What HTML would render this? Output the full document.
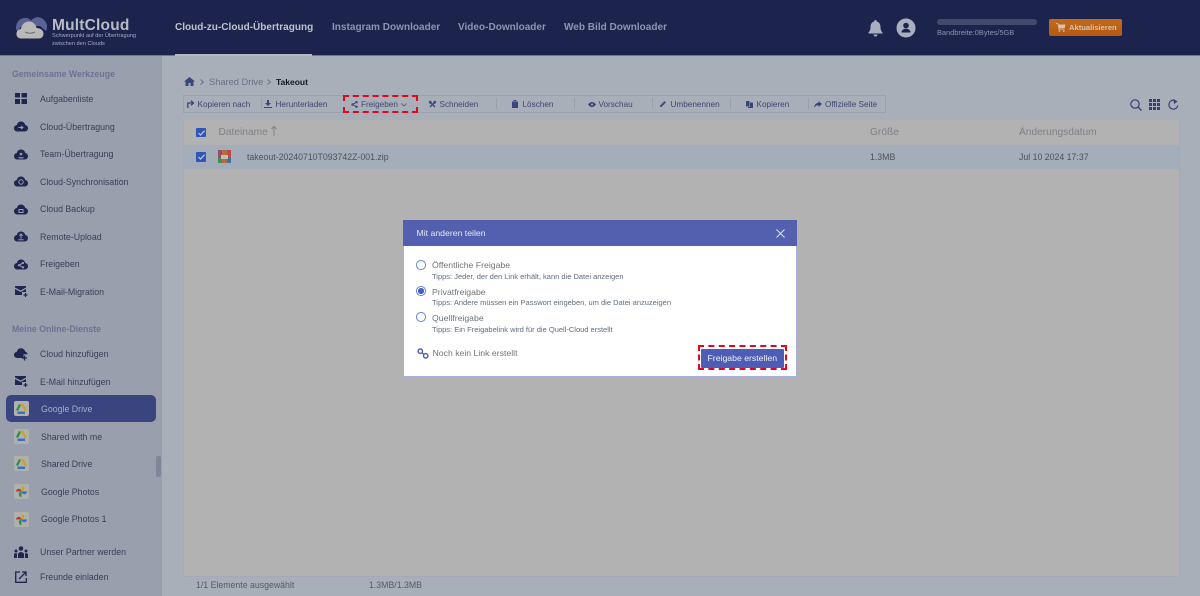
<!DOCTYPE html>
<html lang="de"><head><meta charset="utf-8"><title>MultCloud</title>
<style>
html,body{margin:0;padding:0}
body{width:1200px;height:596px;overflow:hidden;position:relative;background:#a9afb9;font-family:"Liberation Sans",sans-serif;font-size:9px;color:#3f4559}
.a{position:absolute;white-space:nowrap}
svg{position:absolute;overflow:visible}
#hd{left:0;top:0;width:1200px;height:56px;background:#1c244e;border-bottom:1px solid #6f7690;box-sizing:border-box}
#sb{left:0;top:56px;width:162px;height:540px;background:#9a9fae}
.nav{font-size:10px;font-weight:bold;top:22px;letter-spacing:.02px}
.sec{font-size:8.75px;font-weight:bold;color:#6c7293;left:12px}
.it{font-size:8.8px;color:#383e56;left:40px}
.gi{left:14px;width:15px;height:15px;background:#b0b1ad;border-radius:2px}
.tb{font-size:8.2px;color:#3d4670;top:100px}
.sep{position:absolute;top:98px;width:1px;height:11px;background:#98a0b0}
.ck{position:absolute;left:196px;width:9.5px;height:9.5px;background:#2f55b8;border-radius:1px}
.rd{position:absolute;left:416px;width:9.5px;height:9.5px;border:1px solid #6c86d8;border-radius:50%;background:#fff;box-sizing:border-box}
.opt{font-size:8.7px;color:#6f7378;left:432px}
.tip{font-size:7.5px;color:#5f6d80;left:432px}
.t{font-size:8.75px;color:#4d5158}
</style></head><body>
<div class="a" id="hd"></div>
<div class="a" id="sb"></div>

<!-- logo -->
<svg style="left:14px;top:16px" width="34" height="24" viewBox="0 0 34 24">
<path d="M3 15C.5 11 3 3 10 2C13 1.500 15 2.500 17 4.500C20 1 25 0 29 3C33 6 34 11 32 15L26 10L8 10Z" fill="#5a6398"/>
<path d="M7 22.500C3.500 22.500 2 19.500 2.500 17C3 14.500 5 13 7 13C7.500 8.500 11 5.500 15 5.500C19 5.500 22 8.500 22.500 12C26.500 12 29.500 14.500 29.500 17.500C29.500 20.500 27.500 22.500 25 22.500Z" fill="#b9bab8"/>
<path d="M11 16Q16 18.500 21 16" stroke="#6b6f76" stroke-width="1" fill="none"/>
</svg>
<div class="a" style="left:52px;top:17px;font-size:15.5px;font-weight:bold;color:#b9bcc4;letter-spacing:.2px">MultCloud</div>
<div class="a" style="left:52px;top:33px;font-size:5.6px;color:#a7a9c4">Schwerpunkt auf der Übertragung</div>
<div class="a" style="left:52px;top:41px;font-size:5.6px;color:#a7a9c4">zwischen den Clouds</div>

<div class="a nav" style="left:175px;color:#bfc3cc">Cloud-zu-Cloud-Übertragung</div>
<div class="a" style="left:175px;top:54px;width:137px;height:2px;background:#b5b9c2"></div>
<div class="a nav" style="left:332px;color:#8f95ae">Instagram Downloader</div>
<div class="a nav" style="left:458px;color:#8f95ae">Video-Downloader</div>
<div class="a nav" style="left:564px;color:#8f95ae">Web Bild Downloader</div>

<!-- bell, user -->
<svg style="left:868px;top:20px" width="15" height="17" viewBox="0 0 15 17"><path d="M7.500 0a1.300 1.300 0 0 1 1.300 1.500C11.500 2.200 12.500 4.500 12.500 7c0 3 .8 4.300 2 5.500V13.500H.5V12.500C1.700 11.300 2.500 10 2.500 7c0-2.500 1-4.800 3.700-5.500A1.300 1.300 0 0 1 7.500 0zM5.500 14.500h4a2 2 0 0 1-4 0z" fill="#a9aec0"/></svg>
<svg style="left:896px;top:18px" width="20" height="20" viewBox="0 0 20 20"><circle cx="10" cy="10" r="9.500" fill="#a9aec0"/><circle cx="10" cy="7.500" r="2.800" fill="#1c244e"/><path d="M5.500 14.500c0-5 9-5 9 0z" fill="#1c244e"/></svg>
<div class="a" style="left:937px;top:19px;width:100px;height:6px;border-radius:3px;background:#444a6c"></div>
<div class="a" style="left:937px;top:28px;font-size:7.4px;color:#8d93ad">Bandbreite:0Bytes/5GB</div>
<div class="a" style="left:1049px;top:19px;width:73px;height:17px;border-radius:2px;background:linear-gradient(#c46a1c,#b45a12)"></div>
<svg style="left:1056px;top:23px" width="10" height="9" viewBox="0 0 10 9"><path d="M0 0H2L2.500 1.500H9.500L8.500 5.500H3.200L3.500 6.500H8.500V7H2.800L1.500 .8H0Z" fill="#d3c4b5"/><circle cx="3.500" cy="8" r=".9" fill="#d3c4b5"/><circle cx="7.800" cy="8" r=".9" fill="#d3c4b5"/></svg>
<div class="a" style="left:1069px;top:23px;font-size:7.6px;font-weight:bold;color:#d8c4b2">Aktualisieren</div>

<!-- sidebar -->
<div class="a sec" style="top:69px">Gemeinsame Werkzeuge</div>
<svg style="left:15px;top:93px" width="12" height="11" viewBox="0 0 12 11"><path d="M0 0H5V4.500H0ZM6.500 0H12V4.500H6.500ZM0 6H5V11H0ZM6.500 6H12V11H6.500Z" fill="#1f2750"/></svg>
<div class="a it" style="top:94px">Aufgabenliste</div>

<svg style="left:14px;top:121px" width="14" height="11" viewBox="0 0 14 11"><path d="M3.500 10.500C1.500 10.500 0 9 0 7.200C0 5.500 1.300 4.200 2.900 4C3.300 1.800 5 .5 7 .5C9.200 .5 10.900 2 11.200 4C12.800 4.200 14 5.500 14 7.200C14 9 12.500 10.500 10.500 10.500Z" fill="#1f2750"/><path d="M4.500 6.500H8.500M7 5L9 6.500L7 8" stroke="#9a9fae" fill="none"/></svg>
<div class="a it" style="top:121.500px">Cloud-Übertragung</div>
<svg style="left:14px;top:149px" width="14" height="11" viewBox="0 0 14 11"><path d="M3.500 10.500C1.500 10.500 0 9 0 7.200C0 5.500 1.300 4.200 2.900 4C3.300 1.800 5 .5 7 .5C9.200 .5 10.900 2 11.200 4C12.800 4.200 14 5.500 14 7.200C14 9 12.500 10.500 10.500 10.500Z" fill="#1f2750"/><circle cx="7" cy="5" r="1.300" fill="#9a9fae"/><path d="M4.500 8.800H9.500" stroke="#9a9fae" stroke-width="1.200"/></svg>
<div class="a it" style="top:149px">Team-Übertragung</div>
<svg style="left:14px;top:176px" width="14" height="11" viewBox="0 0 14 11"><path d="M3.500 10.500C1.500 10.500 0 9 0 7.200C0 5.500 1.300 4.200 2.900 4C3.300 1.800 5 .5 7 .5C9.200 .5 10.900 2 11.200 4C12.800 4.200 14 5.500 14 7.200C14 9 12.500 10.500 10.500 10.500Z" fill="#1f2750"/><circle cx="7" cy="6" r="2.200" stroke="#9a9fae" fill="none"/></svg>
<div class="a it" style="top:176.500px">Cloud-Synchronisation</div>
<svg style="left:14px;top:204px" width="14" height="11" viewBox="0 0 14 11"><path d="M3.500 10.500C1.500 10.500 0 9 0 7.200C0 5.500 1.300 4.200 2.900 4C3.300 1.800 5 .5 7 .5C9.200 .5 10.900 2 11.200 4C12.800 4.200 14 5.500 14 7.200C14 9 12.500 10.500 10.500 10.500Z" fill="#1f2750"/><path d="M5 5.500H9V8.500H5Z" stroke="#9a9fae" fill="none"/></svg>
<div class="a it" style="top:204px">Cloud Backup</div>
<svg style="left:14px;top:231px" width="14" height="11" viewBox="0 0 14 11"><path d="M3.500 10.500C1.500 10.500 0 9 0 7.200C0 5.500 1.300 4.200 2.900 4C3.300 1.800 5 .5 7 .5C9.200 .5 10.900 2 11.200 4C12.800 4.200 14 5.500 14 7.200C14 9 12.500 10.500 10.500 10.500Z" fill="#1f2750"/><path d="M7 3V7.500M5.300 4.700L7 3L8.700 4.700M4.500 8.800H9.500" stroke="#9a9fae" fill="none"/></svg>
<div class="a it" style="top:231.500px">Remote-Upload</div>
<svg style="left:14px;top:259px" width="14" height="11" viewBox="0 0 14 11"><path d="M3.500 10.500C1.500 10.500 0 9 0 7.200C0 5.500 1.300 4.200 2.900 4C3.300 1.800 5 .5 7 .5C9.200 .5 10.900 2 11.200 4C12.800 4.200 14 5.500 14 7.200C14 9 12.500 10.500 10.500 10.500Z" fill="#1f2750"/><path d="M5 6.200L9 4M5 6.200L9 8.400" stroke="#9a9fae" fill="none"/><circle cx="5" cy="6.200" r="1.100" fill="#9a9fae"/><circle cx="9" cy="4" r="1.100" fill="#9a9fae"/><circle cx="9" cy="8.400" r="1.100" fill="#9a9fae"/></svg>
<div class="a it" style="top:259px">Freigeben</div>
<svg style="left:15px;top:286px" width="13" height="12" viewBox="0 0 13 12"><path d="M0 0H11V1.500L5.500 4.500L0 1.500ZM0 3L5.500 6L11 3V6H7V9H0Z" fill="#1f2750"/><path d="M10.500 7V11M8.500 9H12.500" stroke="#1f2750" stroke-width="1.200"/></svg>
<div class="a it" style="top:286.500px">E-Mail-Migration</div>

<div class="a sec" style="top:324px">Meine Online-Dienste</div>
<svg style="left:14px;top:348px" width="14" height="13" viewBox="0 0 14 13"><path d="M3.500 10C1.500 10 0 8.700 0 7C0 5.300 1.300 4 2.900 3.800C3.300 1.600 5 .3 7 .3C9.200 .3 10.900 1.800 11.200 3.800C12.500 4 13.500 5 13.800 6.300H9.500V10Z" fill="#1f2750"/><path d="M10.500 7.500V12.500M8 10H13" stroke="#1f2750" stroke-width="1.300"/></svg>
<div class="a it" style="top:349px">Cloud hinzufügen</div>
<svg style="left:15px;top:376px" width="13" height="12" viewBox="0 0 13 12"><path d="M0 0H11V1.500L5.500 4.500L0 1.500ZM0 3L5.500 6L11 3V6H7V9H0Z" fill="#1f2750"/><path d="M10.500 7V11M8.500 9H12.500" stroke="#1f2750" stroke-width="1.200"/></svg>
<div class="a it" style="top:376.500px">E-Mail hinzufügen</div>

<div class="a" style="left:6px;top:395px;width:150px;height:27px;border-radius:5px;background:#3a447e"></div>
<div class="a gi" style="top:401px"></div>
<svg style="left:16px;top:403.500px" width="11" height="10" viewBox="0 0 11 10"><path d="M4 .5L1 6.500" stroke="#2f8f52" stroke-width="2.400"/><path d="M4.500 .8H6.500L10 7" stroke="#c9a32a" stroke-width="2.400" fill="none"/><path d="M1.500 8.800H9" stroke="#3a6fc4" stroke-width="2.400"/></svg>
<div class="a it" style="top:404px;left:41px;color:#a9aec8">Google Drive</div>

<div class="a gi" style="top:428.500px"></div>
<svg style="left:16px;top:431px" width="11" height="10" viewBox="0 0 11 10"><path d="M4 .5L1 6.500" stroke="#2f8f52" stroke-width="2.400"/><path d="M4.500 .8H6.500L10 7" stroke="#c9a32a" stroke-width="2.400" fill="none"/><path d="M1.500 8.800H9" stroke="#3a6fc4" stroke-width="2.400"/></svg>
<div class="a it" style="top:431.500px;left:41px">Shared with me</div>
<div class="a gi" style="top:456px"></div>
<svg style="left:16px;top:458.500px" width="11" height="10" viewBox="0 0 11 10"><path d="M4 .5L1 6.500" stroke="#2f8f52" stroke-width="2.400"/><path d="M4.500 .8H6.500L10 7" stroke="#c9a32a" stroke-width="2.400" fill="none"/><path d="M1.500 8.800H9" stroke="#3a6fc4" stroke-width="2.400"/></svg>
<div class="a it" style="top:459px;left:41px">Shared Drive</div>

<div class="a gi" style="top:484px"></div>
<svg style="left:16px;top:486px" width="11" height="11" viewBox="0 0 13 13"><path d="M6.500 6.500V0A3.200 3.200 0 0 1 6.500 6.500Z" fill="#b3402f" transform="rotate(-90 6.500 6.500)"/><path d="M6.500 6.500V0A3.200 3.200 0 0 1 6.500 6.500Z" fill="#c9a32a"/><path d="M6.500 6.500V0A3.200 3.200 0 0 1 6.500 6.500Z" fill="#3a6fc4" transform="rotate(90 6.500 6.500)"/><path d="M6.500 6.500V0A3.200 3.200 0 0 1 6.500 6.500Z" fill="#2f8f52" transform="rotate(180 6.500 6.500)"/></svg>
<div class="a it" style="top:486.500px;left:41px">Google Photos</div>
<div class="a gi" style="top:511.500px"></div>
<svg style="left:16px;top:513.500px" width="11" height="11" viewBox="0 0 13 13"><path d="M6.500 6.500V0A3.200 3.200 0 0 1 6.500 6.500Z" fill="#b3402f" transform="rotate(-90 6.500 6.500)"/><path d="M6.500 6.500V0A3.200 3.200 0 0 1 6.500 6.500Z" fill="#c9a32a"/><path d="M6.500 6.500V0A3.200 3.200 0 0 1 6.500 6.500Z" fill="#3a6fc4" transform="rotate(90 6.500 6.500)"/><path d="M6.500 6.500V0A3.200 3.200 0 0 1 6.500 6.500Z" fill="#2f8f52" transform="rotate(180 6.500 6.500)"/></svg>
<div class="a it" style="top:514px;left:41px">Google Photos 1</div>
<div class="a" style="left:156px;top:456px;width:5px;height:21px;border-radius:2px;background:#7f8699"></div>

<svg style="left:14px;top:546px" width="14" height="12" viewBox="0 0 14 12"><circle cx="7" cy="2.500" r="2.300" fill="#1f2750"/><circle cx="2" cy="5" r="1.500" fill="#1f2750"/><circle cx="12" cy="5" r="1.500" fill="#1f2750"/><path d="M4 12V7.500Q7 4.500 10 7.500V12ZM0 12V8Q1.500 6.500 3 7.500V12ZM11 12V7.500Q12.500 6.500 14 8V12Z" fill="#1f2750"/></svg>
<div class="a it" style="top:547px">Unser Partner werden</div>
<svg style="left:15px;top:571px" width="12" height="12" viewBox="0 0 12 12"><path d="M5 1H.7V11.300H11.300V7" stroke="#1f2750" stroke-width="1.300" fill="none"/><path d="M4 8L10.500 1.500M7 1H11V5" stroke="#1f2750" stroke-width="1.300" fill="none"/></svg>
<div class="a it" style="top:572px">Freunde einladen</div>

<!-- breadcrumb -->
<svg style="left:184px;top:77px" width="11" height="9" viewBox="0 0 11 9"><path d="M5.500 0L11 4.500H9.500V9H6.500V6H4.500V9H1.500V4.500H0Z" fill="#3a447e"/></svg>
<svg style="left:200px;top:79px" width="4" height="6" viewBox="0 0 4 6"><path d="M.5 .5L3.300 3L.5 5.500" stroke="#6a7080" fill="none"/></svg>
<div class="a" style="left:209px;top:77px;font-size:9.3px;color:#6a7080">Shared Drive</div>
<svg style="left:266.500px;top:79px" width="4" height="6" viewBox="0 0 4 6"><path d="M.5 .5L3.300 3L.5 5.500" stroke="#6a7080" fill="none"/></svg>
<div class="a" style="left:276px;top:77px;font-size:8.5px;font-weight:bold;color:#15171f">Takeout</div>

<!-- toolbar -->
<div class="a" style="left:183px;top:95px;width:703px;height:18px;border:1px solid #9aa2b2;box-sizing:border-box"></div>
<svg style="left:187px;top:100px" width="8" height="8" viewBox="0 0 8 8"><path d="M.8 8V3H5.500M4 .8L6.500 3L4 5.200" stroke="#3a447e" stroke-width="1.300" fill="none"/></svg>
<div class="a tb" style="left:197.500px">Kopieren nach</div><i class="sep" style="left:261px"></i>
<svg style="left:264px;top:100px" width="8" height="8" viewBox="0 0 8 8"><path d="M3 0H5V3H7L4 6L1 3H3ZM0 7H8V8H0Z" fill="#3a447e"/></svg>
<div class="a tb" style="left:275.500px">Herunterladen</div>
<svg style="left:351px;top:101px" width="7" height="7" viewBox="0 0 7 7"><path d="M5.500 1.200L1.500 3.500L5.500 5.800" stroke="#3a447e" fill="none"/><circle cx="5.500" cy="1.200" r="1.200" fill="#3a447e"/><circle cx="1.500" cy="3.500" r="1.200" fill="#3a447e"/><circle cx="5.500" cy="5.800" r="1.200" fill="#3a447e"/></svg>
<div class="a tb" style="left:361px">Freigeben</div>
<svg style="left:401px;top:103px" width="6" height="4" viewBox="0 0 6 4"><path d="M.5 .5L3 3L5.500 .5" stroke="#5f6780" fill="none"/></svg>
<svg style="left:429px;top:100.500px" width="7" height="7" viewBox="0 0 7 7"><path d="M1 1L6 6M6 1L1 6" stroke="#3a447e" stroke-width="1.300"/><circle cx="1.200" cy="1.200" r="1" stroke="#3a447e" fill="none" stroke-width=".8"/><circle cx="5.800" cy="1.200" r="1" stroke="#3a447e" fill="none" stroke-width=".8"/></svg>
<div class="a tb" style="left:439.500px">Schneiden</div><i class="sep" style="left:496px"></i>
<svg style="left:512px;top:100px" width="6" height="8" viewBox="0 0 6 8"><path d="M0 1.500H6V8H0ZM1.500 0H4.500V1H1.500Z" fill="#3a447e"/></svg>
<div class="a tb" style="left:522.500px">Löschen</div><i class="sep" style="left:574px"></i>
<svg style="left:588px;top:102px" width="8" height="5" viewBox="0 0 8 5"><path d="M0 2.500Q4-2.500 8 2.500Q4 7.500 0 2.500Z" fill="#3a447e"/><circle cx="4" cy="2.500" r="1" fill="#a9afb9"/></svg>
<div class="a tb" style="left:598.500px">Vorschau</div><i class="sep" style="left:652px"></i>
<svg style="left:660px;top:100.500px" width="6" height="6" viewBox="0 0 6 6"><path d="M0 6V4.500L4.500 0L6 1.500L1.500 6Z" fill="#4a5278"/></svg>
<div class="a tb" style="left:670.500px">Umbenennen</div><i class="sep" style="left:730px"></i>
<svg style="left:746px;top:100.500px" width="7" height="7" viewBox="0 0 7 7"><path d="M0 0H3.500V5.500H0ZM4 1.500H7V7H2V6H4Z" fill="#3a447e"/></svg>
<div class="a tb" style="left:756.500px">Kopieren</div><i class="sep" style="left:808px"></i>
<svg style="left:814px;top:100.500px" width="8" height="7" viewBox="0 0 8 7"><path d="M4.500 0L8 3L4.500 6V4.200C2.500 4.200 1 5 0 7C.3 4 2 2 4.500 1.800Z" fill="#3a447e"/></svg>
<div class="a tb" style="left:825px">Offizielle Seite</div>

<div class="a" style="left:343px;top:95px;width:75px;height:18px;border:2px dashed #e4061a;box-sizing:border-box"></div>

<!-- right tools -->
<svg style="left:1130px;top:99px" width="12" height="12" viewBox="0 0 12 12"><circle cx="5" cy="5" r="4.200" stroke="#363f7c" stroke-width="1.200" fill="none"/><path d="M8 8L11.500 11.500" stroke="#363f7c" stroke-width="1.300"/></svg>
<svg style="left:1149px;top:99px" width="11" height="11" viewBox="0 0 11 11" fill="#363f7c"><path d="M0 0h3v3H0zM4 0h3v3H4zM8 0h3v3H8zM0 4h3v3H0zM4 4h3v3H4zM8 4h3v3H8zM0 8h3v3H0zM4 8h3v3H4zM8 8h3v3H8z"/></svg>
<svg style="left:1168px;top:99px" width="11" height="11" viewBox="0 0 11 11"><path d="M9.800 6.500A4.500 4.500 0 1 1 6 1.200" stroke="#363f7c" stroke-width="1.200" fill="none"/><path d="M5.500 0L9.500 2.500L6 5Z" fill="#363f7c"/></svg>

<!-- table -->
<div class="a" style="left:183px;top:120px;width:997px;height:457px;background:#b2b2b2;border:1px solid #a3abba;border-top:0;box-sizing:border-box"></div>
<div class="a" style="left:184px;top:145px;width:995px;height:24px;background:#a4aeba"></div>
<div class="ck" style="top:127.500px"></div>
<svg style="left:197.500px;top:129.500px" width="7" height="6" viewBox="0 0 7 6"><path d="M.5 3L2.500 5L6.500 .8" stroke="#c8cdd4" stroke-width="1.200" fill="none"/></svg>
<div class="a" style="left:218.500px;top:127px;font-size:10.2px;color:#7d8087">Dateiname</div>
<svg style="left:271px;top:126px" width="6" height="10" viewBox="0 0 6 10"><path d="M3 10V1M.5 3L3 .5L5.500 3" stroke="#7d8087" fill="none"/></svg>
<div class="a" style="left:870px;top:127px;font-size:10.2px;color:#7d8087">Größe</div>
<div class="a" style="left:1019px;top:127px;font-size:10.2px;color:#7d8087">Änderungsdatum</div>
<div class="ck" style="top:152px"></div>
<svg style="left:197.500px;top:154px" width="7" height="6" viewBox="0 0 7 6"><path d="M.5 3L2.500 5L6.500 .8" stroke="#c8cdd4" stroke-width="1.200" fill="none"/></svg>
<svg style="left:218px;top:150px" width="13" height="13" viewBox="0 0 13 13"><path d="M0 0H4V13H0Z" fill="#9a4a70"/><path d="M0 8H4V13H0Z" fill="#3f9050"/><path d="M4 0H9V13H4Z" fill="#b86a40"/><path d="M9 0H13V7H9Z" fill="#c04a40"/><path d="M9 7H13V13H9Z" fill="#3f70a8"/><path d="M3 5H10V9H3Z" fill="#c0c0b0"/></svg>
<div class="a t" style="left:247px;top:152px">takeout-20240710T093742Z-001.zip</div>
<div class="a t" style="left:870px;top:152px">1.3MB</div>
<div class="a t" style="left:1019px;top:152px">Jul 10 2024 17:37</div>

<div class="a" style="left:196px;top:579.500px;font-size:8.75px;color:#555b66">1/1 Elemente ausgewählt</div>
<div class="a" style="left:369px;top:579.500px;font-size:8.75px;color:#555b66">1.3MB/1.3MB</div>

<!-- modal -->
<div class="a" style="left:403px;top:220px;width:394px;height:157px;background:#fff;border:1px solid #a9b0dd;box-sizing:border-box"></div>
<div class="a" style="left:403px;top:220px;width:394px;height:26px;background:#5360b0"></div>
<div class="a" style="left:416.500px;top:228px;font-size:8.7px;color:#e4e6f4">Mit anderen teilen</div>
<svg style="left:776px;top:228.500px" width="9" height="9" viewBox="0 0 9 9"><path d="M.5 .5L8.500 8.500M8.500 .5L.5 8.500" stroke="#dfe2f2" stroke-width="1"/></svg>

<div class="rd" style="top:260px"></div>
<div class="a opt" style="top:260px">Öffentliche Freigabe</div>
<div class="a tip" style="top:272px">Tipps: Jeder, der den Link erhält, kann die Datei anzeigen</div>
<div class="rd" style="top:286px"></div>
<div class="a" style="left:418px;top:288px;width:5.5px;height:5.5px;border-radius:50%;background:#3f5fd0"></div>
<div class="a opt" style="top:286.500px">Privatfreigabe</div>
<div class="a tip" style="top:298px">Tipps: Andere müssen ein Passwort eingeben, um die Datei anzuzeigen</div>
<div class="rd" style="top:312px"></div>
<div class="a opt" style="top:313px">Quellfreigabe</div>
<div class="a tip" style="top:324.500px">Tipps: Ein Freigabelink wird für die Quell-Cloud erstellt</div>

<svg style="left:417px;top:348px" width="12" height="11" viewBox="0 0 12 11"><circle cx="3.300" cy="3.200" r="2.200" stroke="#4a5bb0" stroke-width="1.400" fill="none"/><circle cx="8.700" cy="7.800" r="2.200" stroke="#4a5bb0" stroke-width="1.400" fill="none"/><path d="M4.500 4.500L7.500 6.500" stroke="#4a5bb0" stroke-width="1.200"/></svg>
<div class="a" style="left:432.500px;top:348px;font-size:8.7px;color:#70747a">Noch kein Link erstellt</div>

<div class="a" style="left:701px;top:349px;width:83px;height:19px;background:#4d5cb4;border-radius:1px"></div>
<div class="a" style="left:707.500px;top:352.500px;font-size:8.7px;color:#eef0fa">Freigabe erstellen</div>
<div class="a" style="left:698px;top:345px;width:89px;height:25px;border:2px dashed #e4061a;box-sizing:border-box"></div>
</body></html>
